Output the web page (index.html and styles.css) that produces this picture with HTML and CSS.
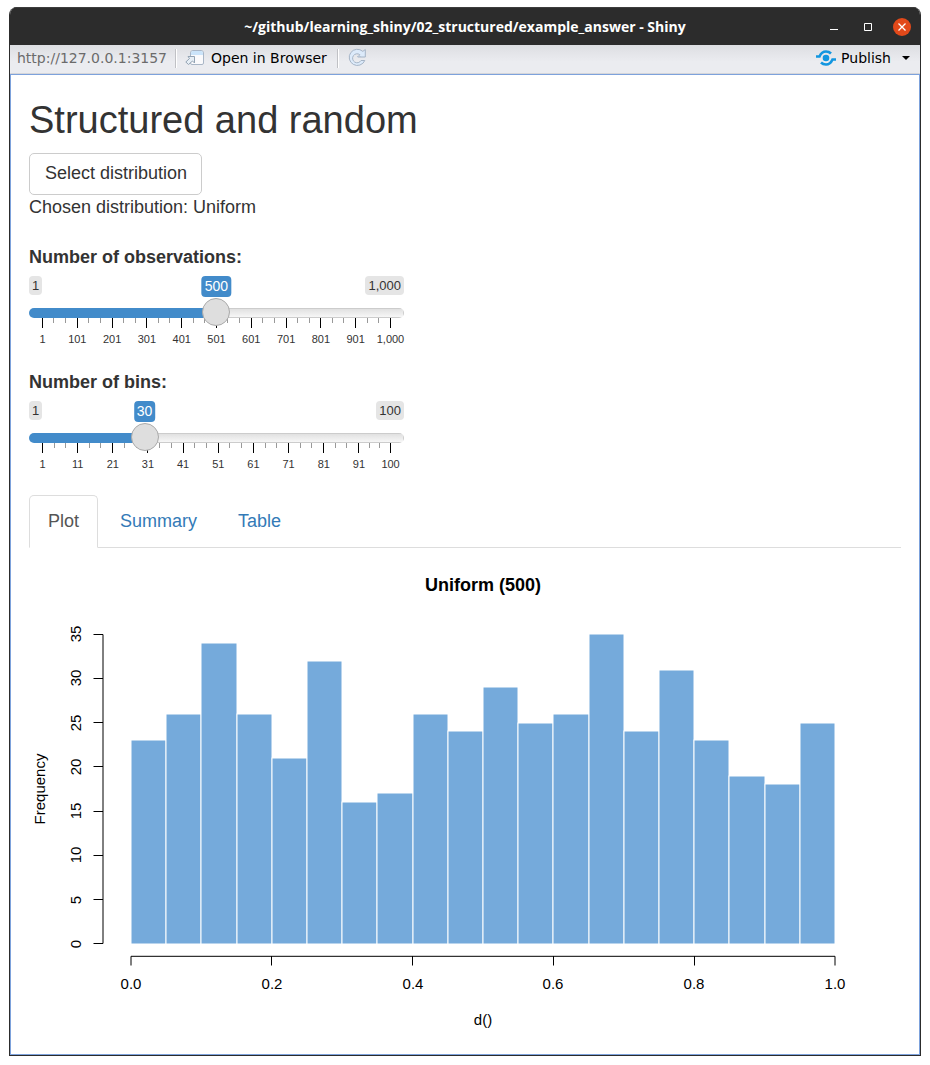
FILE: index.html
```html
<!DOCTYPE html>
<html lang="en">
<head>
<meta charset="utf-8">
<meta name="viewport" content="width=device-width, initial-scale=1">
<title>Structured and random</title>
<link rel="stylesheet" href="styles.css">
</head>
<body>
<div class="window">
  <header class="titlebar">
    <span class="titlebar-text">~/github/learning_shiny/02_structured/example_answer - Shiny</span>
    <div class="controls">
      <button class="control" type="button" aria-label="Minimize"><svg width="10" height="10" viewBox="0 0 10 10"><path d="M1 7.5h8" stroke="#fff"/></svg></button>
      <button class="control" type="button" aria-label="Maximize"><svg width="10" height="10" viewBox="0 0 10 10"><path d="M1.5 1.5h7v7h-7z" fill="none" stroke="#fff"/></svg></button>
      <button class="control control-close" type="button" aria-label="Close"><svg width="10" height="10" viewBox="0 0 10 10"><path d="M1.5 1.5l7 7M8.500 1.500l-7 7" stroke="#fff" stroke-width="1.3"/></svg></button>
    </div>
  </header>
  <nav class="toolbar">
    <span class="url">http://127.0.0.1:3157</span>
    <span class="divider"></span>
    <button class="tool" type="button">
      <svg width="20" height="16" viewBox="0 0 20 16">
        <path d="M5.500 5V3q0-2.500 2.500-2.500h8q2.500 0 2.500 2.500v10q0 1.500-1.500 1.500H7q-1.500 0-1.500-1.500z" fill="#fafafc" stroke="#a9b6c6"/>
        <path d="M6 5V3q0-2 2-2h8q2 0 2 2v2z" fill="#cbe4fa"/>
        <path d="M3 6.500h6.500V13L7.500 11l-4 3.500L.8 12l3.700-3.500z" fill="#e6eef5" stroke="#93a3b3"/>
      </svg>
      Open in Browser
    </button>
    <span class="divider divider-end"></span>
    <button class="tool" type="button" aria-label="Reload">
      <svg width="20" height="20" viewBox="0 0 20 20"><path d="M15.800 3.400L18.300 1.500V9h-7.500l2-2.300a4.500 4.500 0 1 0 1.200 5.800h3.800a8.100 8.100 0 1 1-2-9.100z" fill="#dceafa" stroke="#a5b4c6"/><path d="M10 8.500h4" stroke="#b6c4d5"/></svg>
    </button>
    <button class="tool tool-publish" type="button">
      <svg width="20" height="16" viewBox="0 0 20 16" fill="none" stroke="#1296e0" stroke-width="2.600">
        <circle cx="10" cy="8" r="3.300" fill="#1296e0" stroke="none"/>
        <path d="M0 6.500h3.500C5 3 7 1.500 10 1.500c2.200 0 3.800.8 5 2"/>
        <path d="M20 9.500h-3.500c-1.500 3.500-3.500 5-6.500 5-2.200 0-3.800-.8-5-2"/>
      </svg>
      Publish
      <svg class="caret" width="8" height="4" viewBox="0 0 8 4"><path d="M0 0h8L4 4z"/></svg>
    </button>
  </nav>
  <main class="app">
    <h1 class="heading">Structured and random</h1>
    <button class="select-button" type="button">Select distribution</button>
    <div class="chosen">Chosen distribution: Uniform</div>

    <section class="field">
      <label class="field-label" for="obs">Number of observations:</label>
      <div class="slider" style="--ratio: 0.4995">
        <div class="badges"><span class="limit">1</span><span class="limit">1,000</span><output class="value" for="obs">500</output></div>
        <input class="range" id="obs" type="range" min="1" max="1000" value="500">
        <ul class="scale">
          <li><span>1</span></li><li><span>101</span></li><li><span>201</span></li><li><span>301</span></li><li><span>401</span></li><li><span>501</span></li><li><span>601</span></li><li><span>701</span></li><li><span>801</span></li><li><span>901</span></li><li class="last"><span>1,000</span></li>
        </ul>
      </div>
    </section>

    <section class="field">
      <label class="field-label" for="bins">Number of bins:</label>
      <div class="slider" style="--ratio: 0.2929">
        <div class="badges"><span class="limit">1</span><span class="limit">100</span><output class="value" for="bins">30</output></div>
        <input class="range" id="bins" type="range" min="1" max="100" value="30">
        <ul class="scale">
          <li><span>1</span></li><li><span>11</span></li><li><span>21</span></li><li><span>31</span></li><li><span>41</span></li><li><span>51</span></li><li><span>61</span></li><li><span>71</span></li><li><span>81</span></li><li class="short"><span>91</span></li><li class="last"><span>100</span></li>
        </ul>
      </div>
    </section>

    <nav class="tabs">
      <a class="tab tab-active" href="#plot">Plot</a>
      <a class="tab" href="#summary">Summary</a>
      <a class="tab" href="#table">Table</a>
    </nav>

    <svg class="plot" id="plot" viewBox="29 548 872 500" role="img" aria-label="Histogram of d(), Uniform (500)">
      <text class="plot-title" x="483" y="591">Uniform (500)</text>
      <g class="bars">
        <rect x="131" y="740" width="35" height="204"/>
        <rect x="166" y="714" width="35" height="230"/>
        <rect x="201" y="643" width="36" height="301"/>
        <rect x="237" y="714" width="35" height="230"/>
        <rect x="272" y="758" width="35" height="186"/>
        <rect x="307" y="661" width="35" height="283"/>
        <rect x="342" y="802" width="35" height="142"/>
        <rect x="377" y="793" width="36" height="151"/>
        <rect x="413" y="714" width="35" height="230"/>
        <rect x="448" y="731" width="35" height="213"/>
        <rect x="483" y="687" width="35" height="257"/>
        <rect x="518" y="723" width="35" height="221"/>
        <rect x="553" y="714" width="36" height="230"/>
        <rect x="589" y="634" width="35" height="310"/>
        <rect x="624" y="731" width="35" height="213"/>
        <rect x="659" y="670" width="35" height="274"/>
        <rect x="694" y="740" width="35" height="204"/>
        <rect x="729" y="776" width="36" height="168"/>
        <rect x="765" y="784" width="35" height="160"/>
        <rect x="800" y="723" width="35" height="221"/>
      </g>
      <path class="axis" d="M93.500 634.500h9.500v309h-9.500M93.500 678.500h9.500M93.500 722.500h9.500M93.500 766.500h9.500M93.500 811.500h9.500M93.500 855.500h9.500M93.500 899.500h9.500"/>
      <path class="axis" d="M131 965.500V956.300H835v9.200M271.500 956v9.500M412.500 956v9.500M553.500 956v9.500M694.500 956v9.500"/>
      <g class="tick-text">
        <text x="131" y="989">0.0</text><text x="272" y="989">0.2</text><text x="413" y="989">0.4</text><text x="553" y="989">0.6</text><text x="694" y="989">0.8</text><text x="835" y="989">1.0</text>
        <text x="483" y="1025">d()</text>
        <text transform="translate(81 944) rotate(-90)">0</text>
        <text transform="translate(81 900) rotate(-90)">5</text>
        <text transform="translate(81 855) rotate(-90)">10</text>
        <text transform="translate(81 811) rotate(-90)">15</text>
        <text transform="translate(81 767) rotate(-90)">20</text>
        <text transform="translate(81 723) rotate(-90)">25</text>
        <text transform="translate(81 678) rotate(-90)">30</text>
        <text transform="translate(81 634) rotate(-90)">35</text>
        <text transform="translate(45 789) rotate(-90)">Frequency</text>
      </g>
    </svg>
  </main>
</div>
<script src="app.js"></script>
</body>
</html>
```

FILE: styles.css
```css
* { box-sizing: border-box; }

body {
  margin: 0;
  padding: 7px 9px 9px;
  background: #fff;
  color: #333;
  font-family: "Liberation Sans", Arial, sans-serif;
  font-size: 18px;
  line-height: 25px;
}

button {
  border: 0;
  padding: 0;
  background: none;
  color: inherit;
  font: inherit;
}

.window {
  border: 1px solid #2c2c2c;
  border-top: 0;
  border-radius: 8px 8px 0 0;
  overflow: hidden;
}

.titlebar {
  display: grid;
  grid-template-columns: 1fr auto 1fr;
  align-items: center;
  height: 38px;
  background: #2c2c2c;
  border-top: 1px solid #3d3d3d;
  color: #fff;
}

.titlebar-text {
  grid-column: 2;
  font: bold 14px/20px "Open Sans", "Noto Sans", sans-serif;
}

.controls {
  display: flex;
  justify-content: flex-end;
  gap: 16px;
  padding-right: 9px;
}

.control {
  display: grid;
  place-items: center;
  width: 18px;
  height: 18px;
  border-radius: 50%;
}

.control-close { background: #e2491a; }

.toolbar {
  display: flex;
  align-items: center;
  height: 29px;
  padding: 0 10px 2px 7px;
  background: linear-gradient(#dddee2, #ebecf0 60%);
  border-bottom: 1px solid #d5d6da;
  color: #000;
  font: 14px/20px "DejaVu Sans", sans-serif;
}

.url { color: #6b6b6b; }

.divider {
  width: 2px;
  height: 19px;
  margin: 0 8px;
  background: linear-gradient(to right, #c0c1c5 50%, #fff 50%);
}

.divider-end { margin-left: 10px; }

.tool {
  display: flex;
  align-items: center;
  gap: 6px;
}

.tool-publish {
  margin-left: auto;
  gap: 5px;
}

.caret { margin-left: 6px; }

.app {
  padding: 24px 18px 6px;
  border: 1px solid #7da2dc;
}

.heading {
  margin: 0 0 12px;
  font-size: 38px;
  line-height: 42px;
  font-weight: normal;
}

.select-button {
  display: block;
  padding: 7px 14px 8px 15px;
  border: 1px solid #ccc;
  border-radius: 5px;
  background: #fff;
}

.chosen { margin-bottom: 25px; }

.field {
  width: 375px;
  max-width: 100%;
  margin-bottom: 20px;
}

.field-label {
  display: block;
  margin-bottom: 6px;
  font-weight: bold;
}

.badges {
  position: relative;
  display: flex;
  justify-content: space-between;
  align-items: flex-start;
  height: 22px;
}

.limit,
.value {
  padding: 0 3px;
  border-radius: 4px;
}

.limit {
  background: #e5e5e5;
  font-size: 13px;
  line-height: 19px;
}

.value {
  position: absolute;
  left: calc(14px + (100% - 28px) * var(--ratio));
  transform: translateX(-50%);
  background: #428bca;
  color: #fff;
  font-size: 14px;
  line-height: 21px;
}

.range {
  appearance: none;
  position: relative;
  z-index: 1;
  display: block;
  width: 100%;
  height: 30px;
  margin: 0;
  background: none;
}

.range::-webkit-slider-runnable-track {
  height: 10px;
  border-radius: 5px;
  background:
    linear-gradient(#428bca, #428bca) 0 0 / calc(14px + (100% - 28px) * var(--ratio)) 100% no-repeat,
    linear-gradient(#ccc, #ccc) 0 0 / 100% 1px no-repeat,
    linear-gradient(#ccc, #ccc) 0 100% / 100% 1px no-repeat,
    linear-gradient(to left, #ccc 1px, transparent 1px),
    linear-gradient(#dedede, #fff 120%);
}

.range::-webkit-slider-thumb {
  appearance: none;
  width: 28px;
  height: 28px;
  margin-top: -10px;
  border: 1px solid #aaa;
  border-radius: 50%;
  background: #dedede;
}

.scale {
  display: flex;
  height: 32px;
  margin: -10px 13px 0;
  padding: 0;
  list-style: none;
  font-size: 11px;
  line-height: 14px;
}

.scale li {
  flex: 10 1 0;
  padding-top: 14px;
  background:
    linear-gradient(#000, #000) 0 0 / 1px 10px no-repeat,
    linear-gradient(#999, #999) 34% 0 / 1px 5px no-repeat,
    linear-gradient(#999, #999) 68% 0 / 1px 5px no-repeat;
}

.scale .short { flex-grow: 9; }

.scale .last {
  flex: 0 0 1px;
  background: linear-gradient(#000, #000) 0 0 / 1px 10px no-repeat;
}

.scale span {
  display: flex;
  justify-content: center;
  width: 1px;
  white-space: nowrap;
}

.tabs {
  display: flex;
  gap: 3px;
  border-bottom: 1px solid #ddd;
}

.tab {
  margin-bottom: -1px;
  padding: 13px 18px;
  border: 1px solid transparent;
  border-radius: 5px 5px 0 0;
  color: #337ab7;
  text-decoration: none;
}

.tab-active {
  border-color: #ddd #ddd #fff;
  background: #fff;
  color: #555;
}

.plot {
  display: block;
  width: 100%;
  height: auto;
  fill: #000;
  font-size: 15px;
  text-anchor: middle;
}

.plot-title {
  font-size: 18px;
  font-weight: bold;
}

.bars {
  fill: #75aadb;
  stroke: #fff;
}

.axis {
  fill: none;
  stroke: #000;
}
```

FILE: app.js
```js
document.querySelectorAll(".slider").forEach(function (slider) {
  var input = slider.querySelector(".range");
  var value = slider.querySelector(".value");
  input.addEventListener("input", function () {
    value.textContent = Number(input.value).toLocaleString("en-US");
    slider.style.setProperty("--ratio", (input.value - input.min) / (input.max - input.min));
  });
});
```
